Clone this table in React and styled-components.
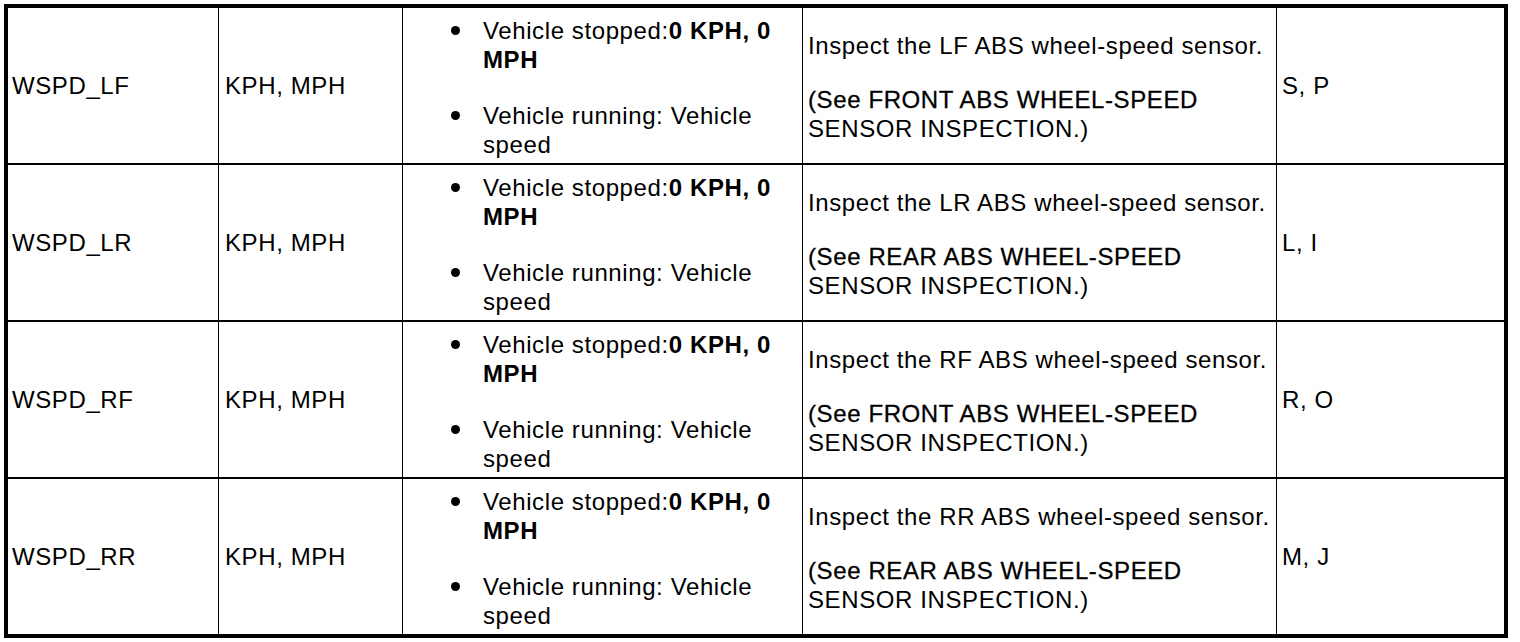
import React from "react";
import styled, { createGlobalStyle } from "styled-components";

const GlobalStyle = createGlobalStyle`
  html, body {
    margin: 0;
    padding: 0;
    background: #fff;
  }
  body {
    font-family: "Liberation Sans", Arial, Helvetica, sans-serif;
    color: #000;
  }
`;

const Page = styled.div`
  padding: 4px 0 0 4px;
`;

// black background shows through the gaps as the rules of the table
const Table = styled.div`
  display: grid;
  grid-template-columns: 210px 183px 399px 473px 227px;
  grid-auto-rows: 155px;
  column-gap: 1px;
  row-gap: 2px;
  width: max-content;
  background: #000;
  border: 4px solid #000;
`;

const Cell = styled.div`
  background: #fff;
  display: flex;
  flex-direction: column;
  justify-content: center;
  padding: ${(p) => (p.$top ? `${p.$top}px` : "0")} ${(p) => (p.$pad != null ? p.$pad : 5)}px 0;
  font-size: 24px;
  line-height: 29px;
  letter-spacing: 0.6px;
`;

const Bullets = styled.ul`
  list-style: none;
  margin: 0;
  padding: 0 0 0 48px;
  display: flex;
  flex-direction: column;
  gap: 27px;
`;

const Bullet = styled.li`
  display: flex;
  align-items: flex-start;

  &::before {
    content: "";
    flex: none;
    width: 9px;
    height: 9px;
    border-radius: 50%;
    background: #000;
    margin: 10px 23px 0 0;
  }
`;

const Paras = styled.div`
  display: flex;
  flex-direction: column;
  gap: 25px;
`;

const Para = styled.p`
  margin: 0;
`;

const Ref = styled.span`
  -webkit-text-stroke: 0.3px #000;
`;

const rows = [
  { name: "WSPD_LF", pos: "LF", side: "FRONT", pins: "S, P" },
  { name: "WSPD_LR", pos: "LR", side: "REAR", pins: "L, I" },
  { name: "WSPD_RF", pos: "RF", side: "FRONT", pins: "R, O" },
  { name: "WSPD_RR", pos: "RR", side: "REAR", pins: "M, J" },
];

const App = () => (
  <Page>
    <GlobalStyle />
    <Table>
      {rows.map((r) => (
        <React.Fragment key={r.name}>
          <Cell $pad={4}>{r.name}</Cell>
          <Cell $pad={6}>KPH, MPH</Cell>
          <Cell $pad={0} $top={3}>
            <Bullets>
              <Bullet>
                <span>
                  Vehicle stopped:<b>0 KPH, 0</b> <b>MPH</b>
                </span>
              </Bullet>
              <Bullet>
                <span>Vehicle running: Vehicle speed</span>
              </Bullet>
            </Bullets>
          </Cell>
          <Cell $top={2}>
            <Paras>
              <Para>Inspect the {r.pos} ABS wheel-speed sensor.</Para>
              <Para>
                <Ref>(See {r.side} ABS WHEEL-SPEED</Ref> SENSOR INSPECTION.)
              </Para>
            </Paras>
          </Cell>
          <Cell>{r.pins}</Cell>
        </React.Fragment>
      ))}
    </Table>
  </Page>
);

export default App;
